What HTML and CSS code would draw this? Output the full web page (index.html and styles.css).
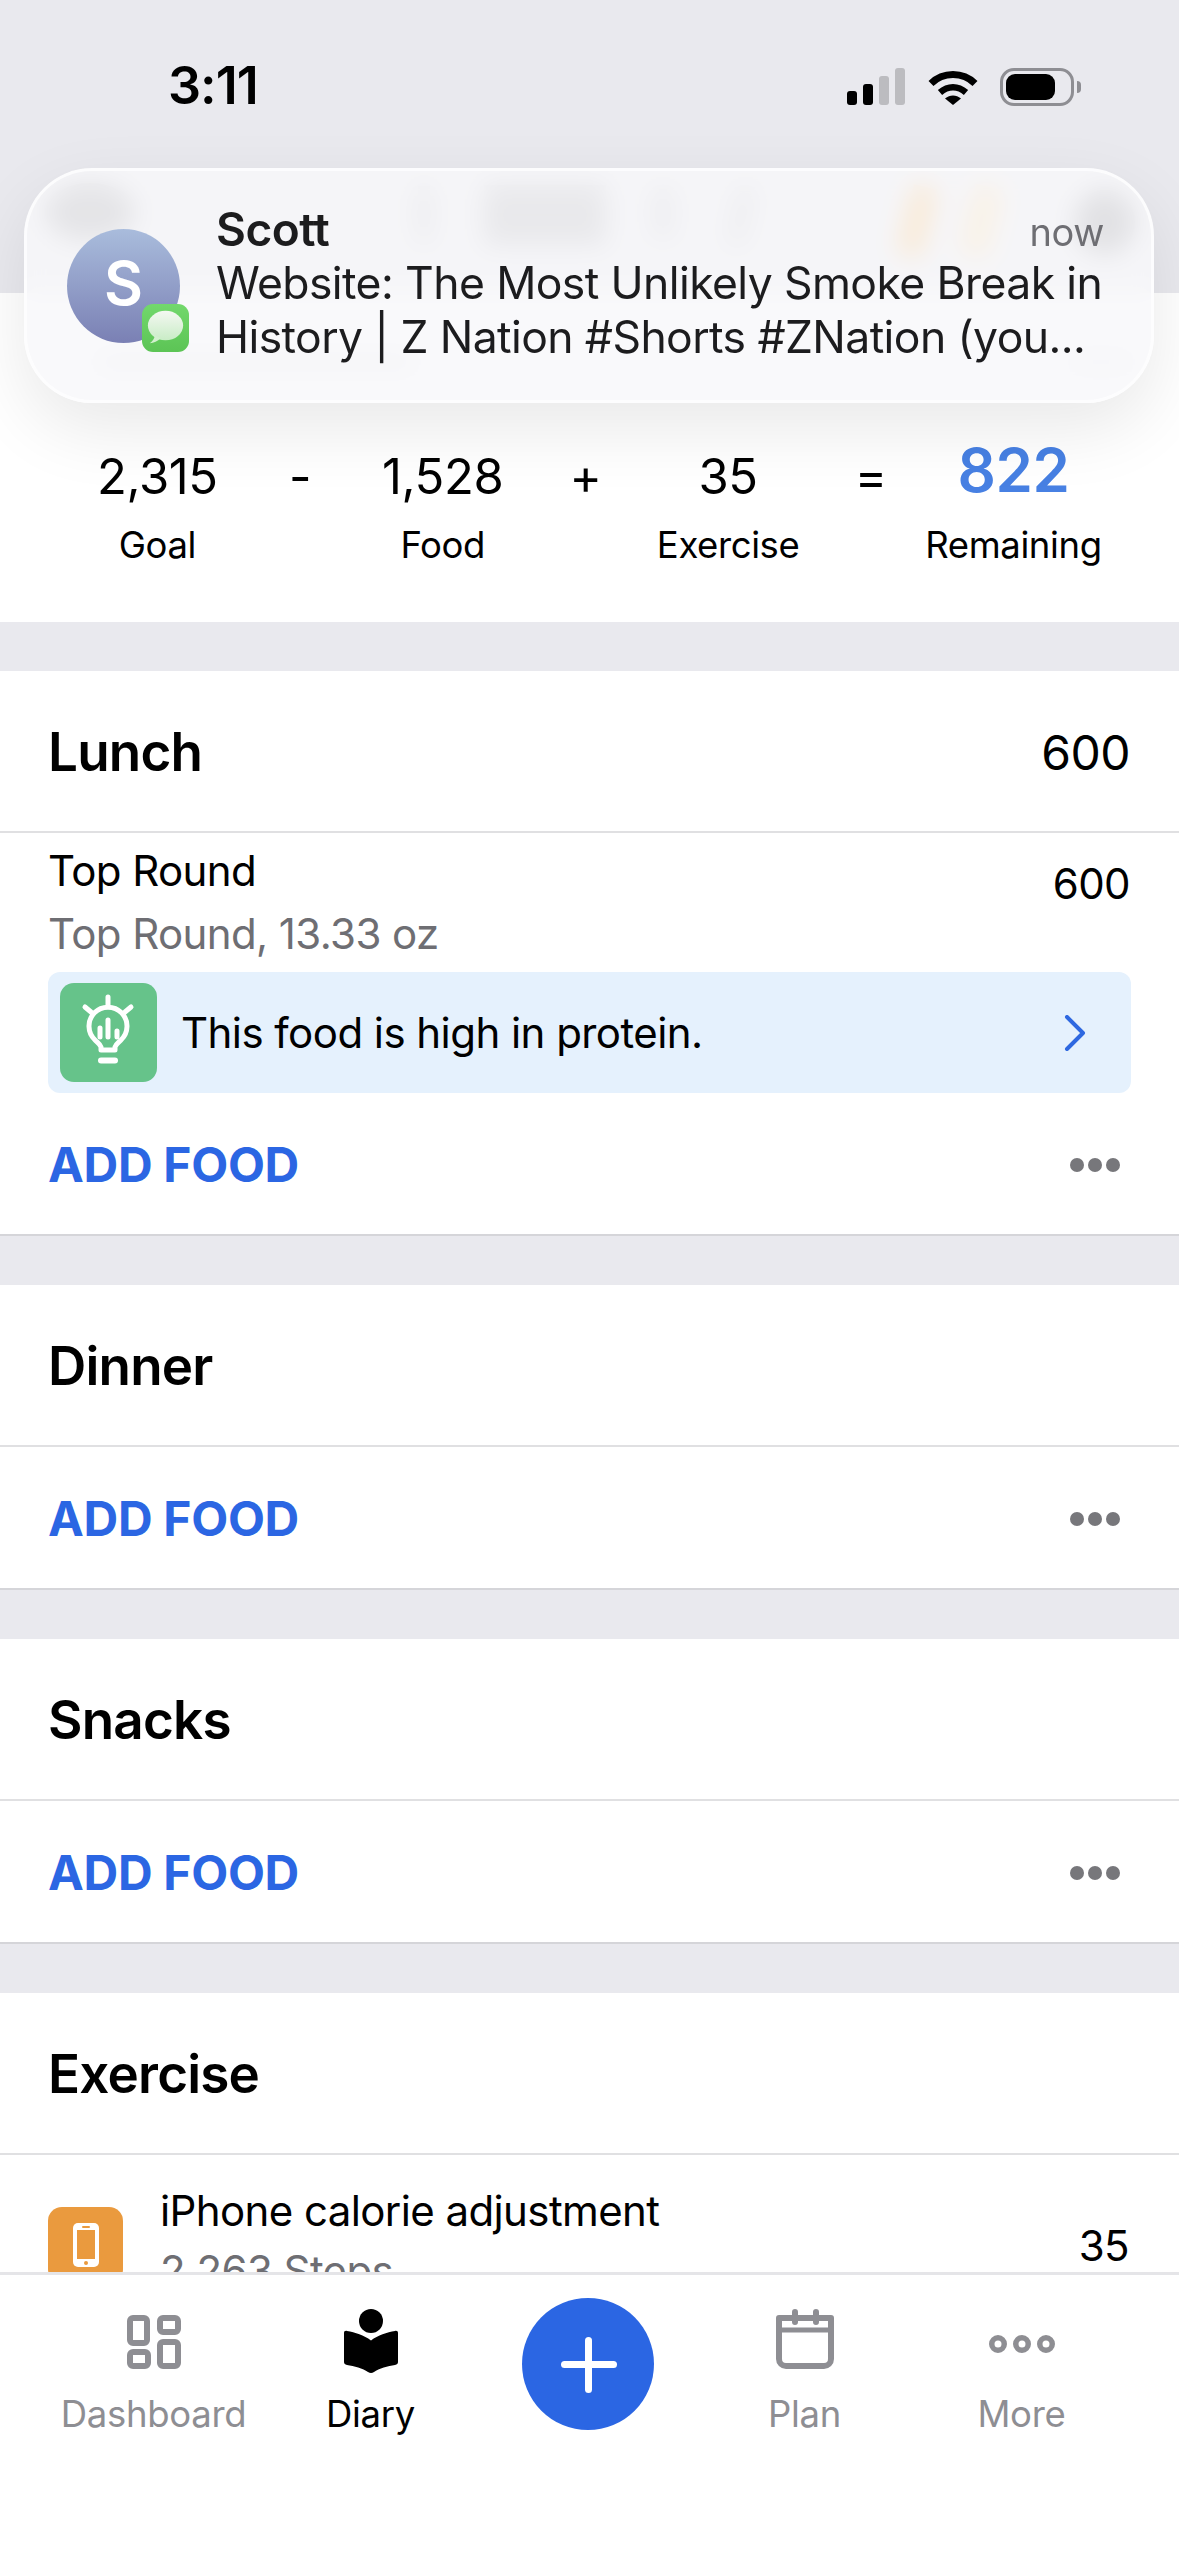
FILE: index.html
```html
<!DOCTYPE html>
<html lang="en">
<head>
  <meta charset="UTF-8">
  <meta name="viewport" content="width=device-width, initial-scale=1.0">
  <title>Diary</title>
  <link rel="stylesheet" href="styles.css">
</head>
<body>
  <div class="phone">
    <div class="scroll">
      <header class="top">
        <div class="status">
          <span class="time">3:11</span>
          <div class="status-icons">
            <div class="signal">
              <i class="bar b1"></i><i class="bar b2"></i><i class="bar b3 off"></i><i class="bar b4 off"></i>
            </div>
            <svg class="wifi" viewBox="0 0 50 37">
              <path d="M3 15.5 C15 3.5 35 3.5 47 15.5" fill="none" stroke="#000" stroke-width="7"/>
              <path d="M12 24.5 C20 17.5 30 17.5 38 24.5" fill="none" stroke="#000" stroke-width="6.5"/>
              <path d="M17 30.5 C22 26.5 28 26.5 33 30.5 L25 37 Z" fill="#000"/>
            </svg>
            <div class="battery"><i class="level"></i></div>
            <i class="battery-cap"></i>
          </div>
        </div>
        <!-- app toolbar, only seen through the blur of the notification -->
        <div class="toolbar">
          <i class="blob round"></i>
          <i class="blob slim"></i>
          <i class="blob block"></i>
          <i class="blob dots"></i>
          <i class="blob slant"></i>
          <i class="blob orange"></i>
          <i class="blob orange pale"></i>
          <i class="blob round small"></i>
        </div>
      </header>

      <section class="summary">
        <div class="date-row">
          <i class="blob line"></i>
          <i class="blob line short"></i>
        </div>
        <div class="stats">
          <div class="stat"><span class="num">2,315</span><span class="lbl">Goal</span></div>
          <div class="stat"><span class="num">-</span></div>
          <div class="stat"><span class="num">1,528</span><span class="lbl">Food</span></div>
          <div class="stat"><span class="num">+</span></div>
          <div class="stat"><span class="num">35</span><span class="lbl">Exercise</span></div>
          <div class="stat"><span class="num">=</span></div>
          <div class="stat"><span class="num big">822</span><span class="lbl">Remaining</span></div>
        </div>
      </section>

      <section class="meal">
        <div class="meal-head"><h2>Lunch</h2><span class="meal-cal">600</span></div>
        <div class="food">
          <div class="food-row">
            <div class="food-main">
              <div class="food-name">Top Round</div>
              <div class="food-sub">Top Round, 13.33 oz</div>
            </div>
            <div class="food-cal">600</div>
          </div>
          <div class="tip">
            <div class="tip-icon">
              <svg viewBox="0 0 97 99" fill="none" stroke="#fff" stroke-width="5" stroke-linecap="round" stroke-linejoin="round">
                <path d="M48 14v9M25 24l6 5M71 24l-6 5"/>
                <path d="M41 67v-3c-1-3-3-4-6-7a19 19 0 1 1 26 0c-3 3-5 4-6 7v3z"/>
                <path d="M40 45v9M48 37v17M57 48v6"/>
                <path d="M41 77.500h14" stroke-width="6"/>
              </svg>
            </div>
            <span class="tip-text">This food is high in protein.</span>
            <svg class="chevron" viewBox="0 0 22 36" fill="none" stroke="#2e68e0" stroke-width="4" stroke-linecap="round" stroke-linejoin="round"><path d="M3 2l16 16L3 34"/></svg>
          </div>
        </div>
        <div class="add-row"><span class="add">ADD FOOD</span><div class="more-dots"><i></i><i></i><i></i></div></div>
      </section>

      <section class="meal">
        <div class="meal-head"><h2>Dinner</h2></div>
        <div class="add-row"><span class="add">ADD FOOD</span><div class="more-dots"><i></i><i></i><i></i></div></div>
      </section>

      <section class="meal">
        <div class="meal-head"><h2>Snacks</h2></div>
        <div class="add-row"><span class="add">ADD FOOD</span><div class="more-dots"><i></i><i></i><i></i></div></div>
      </section>

      <section class="meal">
        <div class="meal-head"><h2>Exercise</h2></div>
        <div class="exercise">
          <div class="ex-icon">
            <svg viewBox="0 0 26 44">
              <rect width="26" height="44" rx="5" fill="#fff"/>
              <rect x="4" y="7" width="18" height="29" fill="#ea9a3e"/>
              <rect x="9" y="3" width="8" height="2" rx="1" fill="#ea9a3e"/>
              <circle cx="13" cy="40" r="2" fill="#ea9a3e"/>
            </svg>
          </div>
          <div class="food-main">
            <div class="food-name">iPhone calorie adjustment</div>
            <div class="food-sub ex-sub">2,263 Steps</div>
          </div>
          <div class="food-cal ex-cal">35</div>
        </div>
      </section>
    </div>

    <nav class="tabs">
      <div class="tab">
        <svg class="tab-icon" width="54" height="64" viewBox="0 -6 54 64" fill="none" stroke="#8e8e93" stroke-width="6">
          <rect x="3" y="3" width="17" height="25" rx="3"/>
          <rect x="33" y="3" width="18" height="14" rx="3"/>
          <rect x="3" y="37" width="18" height="14" rx="3"/>
          <rect x="33" y="27" width="18" height="24" rx="3"/>
        </svg>
        <span>Dashboard</span>
      </div>
      <div class="tab active">
        <svg class="tab-icon" width="54" height="64" viewBox="0 0 54 64" fill="#000">
          <circle cx="27" cy="12" r="12"/>
          <path d="M0 24c0-1.500 1-2.500 3-2 8 1.500 17 4 24 9.500C34 26 43 23.500 51 22c2-.500 3 .500 3 2v29c0 1.500-1 2.500-3 3-7 1-16 3.500-21 7-2 1.300-4 1.300-6 0-5-3.500-14-6-21-7-2-.500-3-1.500-3-3z"/>
        </svg>
        <span>Diary</span>
      </div>
      <div class="tab tab-add">
        <div class="fab"><i class="plus-h"></i><i class="plus-v"></i></div>
      </div>
      <div class="tab">
        <svg class="tab-icon" width="58" height="64" viewBox="0 -2 58 64" fill="none" stroke="#8e8e93" stroke-width="6">
          <path d="M3 7h52v41a7 7 0 0 1-7 7H10a7 7 0 0 1-7-7z" stroke-linejoin="round"/>
          <path d="M3 19h52" stroke-width="5"/>
          <path d="M19 1v10M40 1v10" stroke-linecap="round"/>
        </svg>
        <span>Plan</span>
      </div>
      <div class="tab">
        <svg class="tab-icon" width="66" height="64" viewBox="0 -26 66 64" fill="#8e8e93">
          <path fill-rule="evenodd" d="M0 9a9 9 0 1 1 18 0 9 9 0 0 1-18 0zm5.500 0a3.500 3.500 0 1 0 7 0 3.500 3.500 0 0 0-7 0z"/>
          <path fill-rule="evenodd" d="M24 9a9 9 0 1 1 18 0 9 9 0 0 1-18 0zm5.500 0a3.500 3.500 0 1 0 7 0 3.500 3.500 0 0 0-7 0z"/>
          <path fill-rule="evenodd" d="M48 9a9 9 0 1 1 18 0 9 9 0 0 1-18 0zm5.500 0a3.500 3.500 0 1 0 7 0 3.500 3.500 0 0 0-7 0z"/>
        </svg>
        <span>More</span>
      </div>
    </nav>

    <div class="notification">
      <div class="avatar">
        S
        <div class="badge">
          <svg viewBox="0 0 48 48">
            <defs>
              <linearGradient id="bubble" x1="0" y1="0" x2="0" y2="1">
                <stop offset="0" stop-color="#f4f8f2"/>
                <stop offset="1" stop-color="#c9ecc6"/>
              </linearGradient>
            </defs>
            <ellipse cx="24" cy="22" rx="18" ry="15" fill="url(#bubble)"/>
            <path d="M13 32c0 3-2 6-5 8 4 0 8-2 11-5z" fill="#d3f0cf"/>
          </svg>
        </div>
      </div>
      <div class="note-body">
        <div class="note-head"><strong>Scott</strong><span class="note-time">now</span></div>
        <div class="note-text">Website: The Most Unlikely Smoke Break in</div>
        <div class="note-text">History | Z Nation #Shorts #ZNation (you...</div>
      </div>
    </div>
  </div>
</body>
</html>
```

FILE: styles.css
```css
* {
  box-sizing: border-box;
}
body {
  margin: 0;
  font-family: Inter, "Liberation Sans", sans-serif;
  color: #000;
  background: #fff;
}
.phone {
  position: relative;
  width: 1179px;
  height: 2556px;
  display: flex;
  flex-direction: column;
  overflow: hidden;
}
.scroll {
  height: 2272px;
  flex: none;
  overflow: hidden;
  display: flex;
  flex-direction: column;
  gap: 49px;
  background: #e9e9ee;
}

/* top */
.top {
  flex: none;
  height: 293px;
  margin-bottom: -49px;
  background: #e9e9ee;
}
.status {
  height: 180px;
  padding: 55px 0 0 168px;
  display: flex;
  align-items: flex-start;
  justify-content: space-between;
}
.time {
  font-size: 52px;
  line-height: 62px;
  font-weight: 600;
  letter-spacing: -1px;
}
.status-icons {
  display: flex;
  align-items: flex-start;
  margin: 13px 98px 0 0;
}
.signal {
  display: flex;
  align-items: flex-end;
  gap: 6px;
  height: 37px;
}
.bar {
  width: 10px;
  border-radius: 3px;
  background: #000;
}
.bar.off {
  background: #bcbcc0;
}
.b1 { height: 14px; }
.b2 { height: 21px; }
.b3 { height: 29px; }
.b4 { height: 37px; }
.wifi {
  width: 50px;
  height: 37px;
  margin-left: 23px;
}
.battery {
  width: 74px;
  height: 38px;
  margin-left: 22px;
  padding: 3px;
  border: 3px solid #8e8e93;
  border-radius: 14px;
}
.level {
  display: block;
  width: 49px;
  height: 26px;
  border-radius: 9px;
  background: #000;
}
.battery-cap {
  width: 4px;
  height: 12px;
  margin: 13px 0 0 3px;
  border-radius: 0 4px 4px 0;
  background: #8e8e93;
}
.toolbar {
  display: flex;
  align-items: flex-start;
  padding-left: 45px;
}
.blob {
  display: block;
  flex: none;
}
.round {
  width: 90px;
  height: 58px;
  margin-top: 3px;
  border-radius: 50%;
  background: #8c8c90;
}
.round.small {
  width: 60px;
  height: 64px;
  margin: 10px 0 0 80px;
  background: #7c7c80;
}
.slim {
  width: 12px;
  height: 56px;
  margin: 6px 0 0 283px;
  background: #a8a8ac;
}
.block {
  width: 122px;
  height: 60px;
  margin: 5px 0 0 54px;
  background: #a4a4a8;
}
.dots {
  width: 18px;
  height: 50px;
  margin: 8px 0 0 48px;
  background: #b8b8bc;
}
.slant {
  width: 14px;
  height: 60px;
  margin: 6px 0 0 62px;
  background: #b4b4b8;
  transform: rotate(12deg);
}
.orange {
  width: 24px;
  height: 70px;
  margin: 6px 0 0 157px;
  background: #ffa92e;
  transform: rotate(14deg);
}
.orange.pale {
  width: 28px;
  margin-left: 38px;
  background: #ffd48c;
}

/* summary */
.summary {
  flex: none;
  height: 329px;
  background: #fff;
}
.date-row {
  display: flex;
  justify-content: space-between;
  height: 18px;
  margin: 62px 46px 74px 96px;
}
.line {
  width: 320px;
  height: 14px;
  background: #e2e2e4;
}
.line.short {
  width: 64px;
  background: #e8e8ea;
}
.stats {
  display: grid;
  grid-template-columns: repeat(7, 142.7px);
  padding-left: 86px;
}
.stat {
  display: flex;
  flex-direction: column;
  align-items: center;
  white-space: nowrap;
}
.num {
  font-size: 49px;
  line-height: 60px;
  letter-spacing: -0.4px;
}
.num.big {
  font-size: 60px;
  font-weight: 600;
  color: #4780e3;
  margin: -7px 0 7px;
}
.lbl {
  font-size: 36.5px;
  line-height: 44px;
  margin-top: 16px;
  letter-spacing: -0.4px;
}

/* meals */
.meal {
  flex: none;
  background: #fff;
}
.meal-head {
  height: 162px;
  padding: 2px 49px 0 48px;
  display: flex;
  align-items: center;
  justify-content: space-between;
  border-bottom: 2px solid #e0e0e2;
}
.meal-head h2 {
  margin: 0;
  font-size: 53px;
  font-weight: 600;
  letter-spacing: -0.8px;
}
.meal-cal {
  font-size: 48px;
  letter-spacing: -0.5px;
}
.food {
  height: 260px;
  padding: 10px 48px 0 48px;
}
.food-row {
  display: flex;
  justify-content: space-between;
}
.food-name,
.food-sub,
.food-cal {
  font-size: 42px;
  line-height: 56px;
  letter-spacing: -0.6px;
}
.food-sub {
  margin-top: 7px;
  color: #6e6e73;
}
.food-cal {
  margin: 13px 1px 0 0;
}
.tip {
  display: flex;
  align-items: center;
  height: 121px;
  margin-top: 10px;
  padding: 0 45px 0 12px;
  background: #e5f1fd;
  border-radius: 12px;
}
.tip-icon {
  width: 97px;
  height: 99px;
  background: #66c38a;
  border-radius: 14px;
}
.tip-text {
  flex: 1;
  margin-left: 24px;
  font-size: 42px;
  letter-spacing: -0.55px;
}
.chevron {
  width: 22px;
  height: 36px;
}
.add-row {
  height: 143px;
  padding: 2px 59px 0 48px;
  display: flex;
  align-items: center;
  justify-content: space-between;
  border-bottom: 2px solid #d5d5d9;
}
.add {
  font-size: 48px;
  font-weight: 700;
  color: #2b66e3;
  letter-spacing: -0.3px;
}
.more-dots {
  display: flex;
  gap: 4px;
}
.more-dots i {
  width: 14px;
  height: 14px;
  border-radius: 50%;
  background: #77777b;
}
.exercise {
  display: flex;
  align-items: flex-start;
  padding: 28px 50px 0 48px;
}
.ex-icon {
  width: 75px;
  height: 76px;
  flex: none;
  margin: 24px 37px 0 0;
  background: #ea9a3e;
  border-radius: 14px;
  display: flex;
  align-items: center;
  justify-content: center;
}
.ex-icon svg {
  width: 26px;
  height: 44px;
}
.exercise .food-main {
  flex: 1;
}
.ex-sub {
  margin-top: 4px;
}
.ex-cal {
  margin: 35px 0 0;
}

/* bottom tabs */
.tabs {
  flex: 1;
  display: grid;
  grid-template-columns: repeat(5, 217px);
  padding: 34px 0 0 45px;
  background: #fff;
  border-top: 3px solid #e5e5e8;
}
.tab {
  display: flex;
  flex-direction: column;
  align-items: center;
  font-size: 36.5px;
  line-height: 44px;
  letter-spacing: -0.3px;
  color: #8e8e93;
}
.tab.active {
  color: #000;
}
.tab-icon {
  margin-bottom: 19px;
}
.tab-add {
  margin-top: -11px;
}
.fab {
  position: relative;
  width: 132px;
  height: 132px;
  border-radius: 50%;
  background: #2b66e3;
}
.plus-h,
.plus-v {
  position: absolute;
  background: #fff;
  border-radius: 4px;
}
.plus-h {
  left: 39px;
  top: 63px;
  width: 56px;
  height: 7px;
}
.plus-v {
  left: 63px;
  top: 39px;
  width: 7px;
  height: 56px;
}

/* banner over the page */
.notification {
  position: absolute;
  left: 24px;
  top: 168px;
  width: 1130px;
  height: 235px;
  padding: 31px 40px 0 40px;
  display: flex;
  gap: 36px;
  border: 3px solid rgba(255, 255, 255, 0.75);
  border-radius: 68px;
  background: rgba(248, 248, 250, 0.82);
  backdrop-filter: blur(13px);
  box-shadow: 0 26px 70px rgba(0, 0, 0, 0.09);
}
.avatar {
  position: relative;
  width: 113px;
  height: 114px;
  flex: none;
  margin-top: 27px;
  border-radius: 50%;
  background: linear-gradient(#a9bcdc, #7a80b4);
  color: #fff;
  font-size: 60px;
  font-weight: 600;
  line-height: 108px;
  text-align: center;
}
.badge {
  position: absolute;
  right: -9px;
  bottom: -9px;
  width: 47px;
  height: 48px;
  border-radius: 11px;
  background: linear-gradient(#72d86c, #5cc455);
}
.badge svg {
  display: block;
}
.note-body {
  flex: 1;
  min-width: 0;
  color: #1c1c1e;
}
.note-head {
  display: flex;
  justify-content: space-between;
  align-items: flex-end;
  height: 54px;
  font-size: 46px;
  line-height: 54px;
}
.note-head strong {
  font-weight: 600;
  letter-spacing: -0.5px;
}
.note-time {
  margin: 0 7px -3px 0;
  font-size: 38px;
  color: #6e6e73;
  letter-spacing: -0.4px;
}
.note-text {
  font-size: 44.5px;
  line-height: 54px;
  white-space: nowrap;
  letter-spacing: -0.6px;
}
```
